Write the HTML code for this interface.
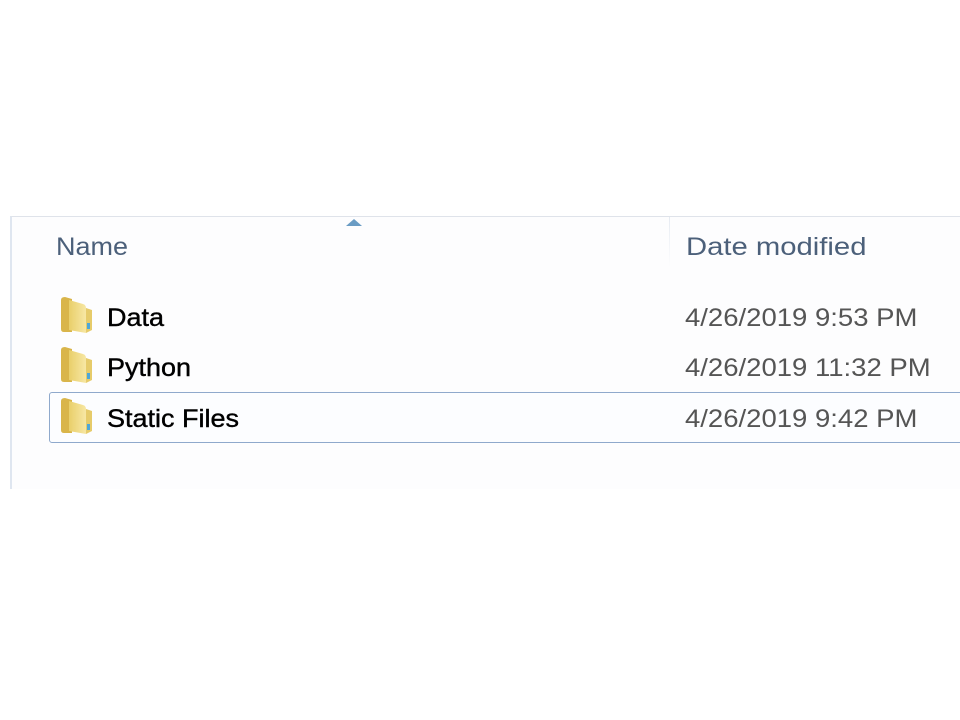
<!DOCTYPE html>
<html><head><meta charset="utf-8"><style>
html,body{margin:0;padding:0;width:960px;height:720px;background:#fff;overflow:hidden;position:relative;font-family:"Liberation Sans",sans-serif;}
.panel{position:absolute;left:10px;top:216px;width:950px;height:272px;background:#fdfdfe;border-top:1px solid #dfe3ea;border-left:2px solid #dfe6f0;}
.t{position:absolute;white-space:nowrap;transform-origin:0 0;}
.hdr{color:#4c607a;font-size:25px;top:233px;}
.nm{color:#000;font-size:25px;transform:scaleX(1.08);-webkit-text-stroke:0.4px #000;}
.dt{color:#555;font-size:25px;left:685px;transform:scaleX(1.10);}
.div{position:absolute;left:669px;top:217px;width:1px;height:50px;background:linear-gradient(#e6ebf2,#fdfdfe);}
.sel{position:absolute;left:49px;top:392px;width:930px;height:49px;border:1px solid #8fa9cc;border-radius:3px;background:#fcfdff;}
svg.f{position:absolute;left:59px;width:36px;height:38px;}
</style></head><body>
<div class="panel"></div>
<div class="div"></div>
<svg style="position:absolute;left:345px;top:218px" width="18" height="9"><path d="M1 8 L9 1 L17 8 Z" fill="#6a9cc4"/></svg>
<div class="t hdr" style="left:56px;transform:scaleX(1.08)">Name</div>
<div class="t hdr" style="left:686px;transform:scaleX(1.17)">Date modified</div>
<div class="sel"></div>
<svg class="f" style="top:296px" viewBox="0 0 36 38"><defs><linearGradient id="g" x1="0" x2="1"><stop offset="0" stop-color="#e9cf6a"/><stop offset="1" stop-color="#f7e7a4"/></linearGradient></defs><path d="M2 4 Q2 1 6 1 L13 3 L13 36 L5 36 Q2 36 2 33 Z" fill="#d9b54a"/><path d="M10 4 L24 8 Q27 9 27 12 L27 37 L10 34 Z" fill="url(#g)"/><path d="M27 12 L33 14 L33 34 L27 37 Z" fill="#e6cb6a"/><rect x="28" y="27" width="3" height="6" fill="#4ea7d8"/></svg>
<svg class="f" style="top:346px" viewBox="0 0 36 38"><path d="M2 4 Q2 1 6 1 L13 3 L13 36 L5 36 Q2 36 2 33 Z" fill="#d9b54a"/><path d="M10 4 L24 8 Q27 9 27 12 L27 37 L10 34 Z" fill="url(#g)"/><path d="M27 12 L33 14 L33 34 L27 37 Z" fill="#e6cb6a"/><rect x="28" y="27" width="3" height="6" fill="#4ea7d8"/></svg>
<svg class="f" style="top:397px" viewBox="0 0 36 38"><path d="M2 4 Q2 1 6 1 L13 3 L13 36 L5 36 Q2 36 2 33 Z" fill="#d9b54a"/><path d="M10 4 L24 8 Q27 9 27 12 L27 37 L10 34 Z" fill="url(#g)"/><path d="M27 12 L33 14 L33 34 L27 37 Z" fill="#e6cb6a"/><rect x="28" y="27" width="3" height="6" fill="#4ea7d8"/></svg>
<div class="t nm" style="left:107px;top:304px">Data</div>
<div class="t nm" style="left:107px;top:354px">Python</div>
<div class="t nm" style="left:107px;top:405px">Static Files</div>
<div class="t dt" style="top:304px">4/26/2019 9:53 PM</div>
<div class="t dt" style="top:354px">4/26/2019 11:32 PM</div>
<div class="t dt" style="top:405px">4/26/2019 9:42 PM</div>
</body></html>
